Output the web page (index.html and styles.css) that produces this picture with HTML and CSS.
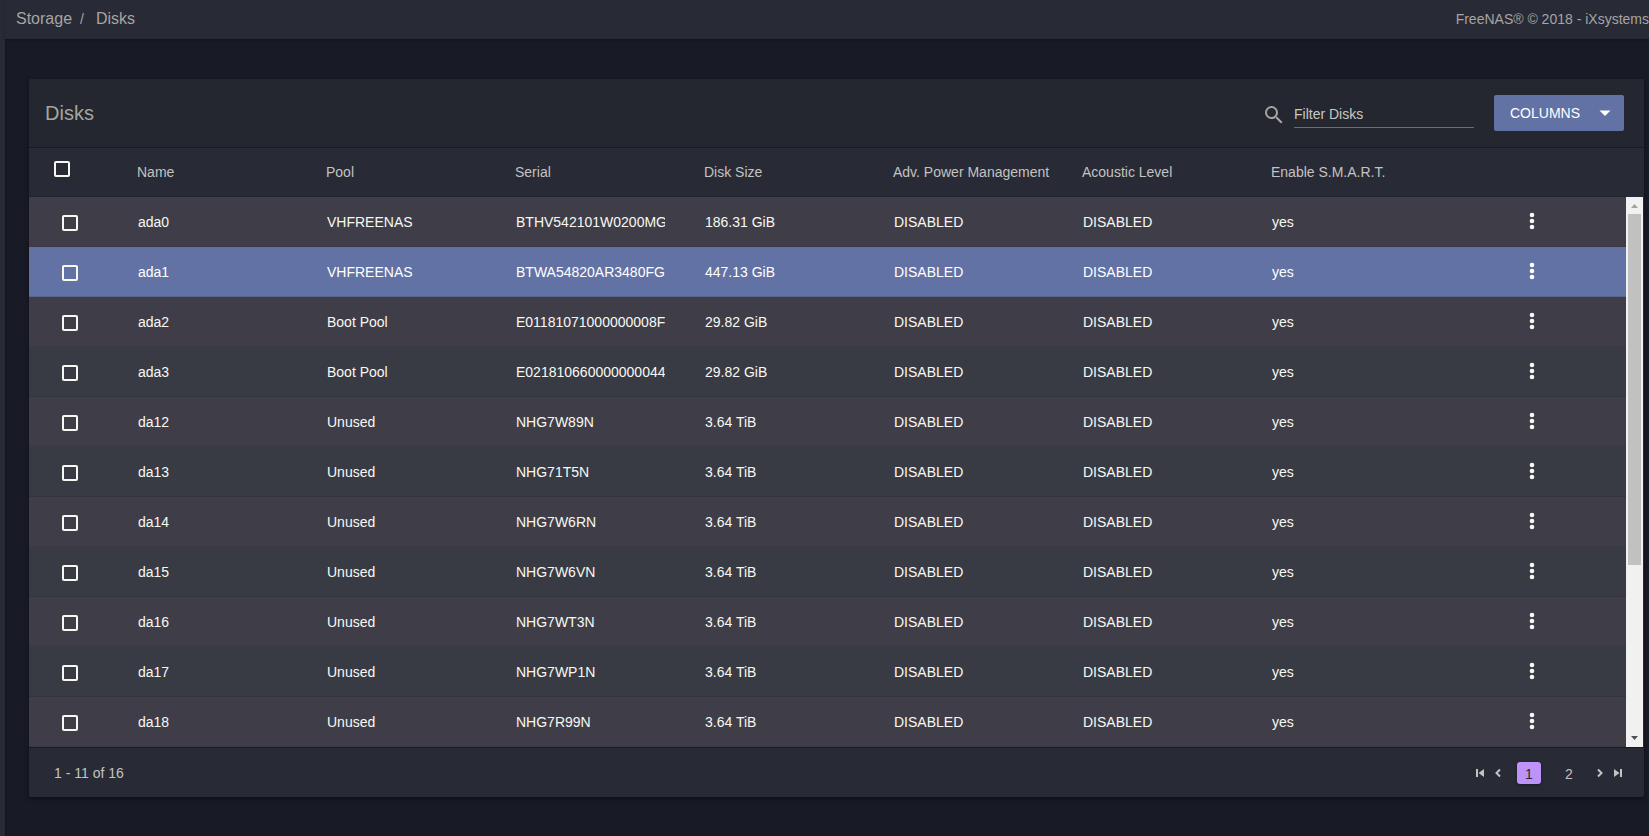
FILE: index.html
```html
<!DOCTYPE html>
<html lang="en">

<head>
  <meta charset="UTF-8" />
  <meta name="viewport" content="width=device-width, initial-scale=1.0" />
  <title>FreeNAS - Disks</title>
  <link rel="stylesheet" href="styles.css">
</head>

<body>
  <div class="sidebar"></div>
  <div class="page">
    <header class="topbar">
      <nav class="breadcrumb">
        <a href="#">Storage</a>
        <span class="slash">/</span>
        <a href="#">Disks</a>
      </nav>
      <span class="copyright">FreeNAS® © 2018 - iXsystems</span>
    </header>

    <main class="content">
      <div class="card">
        <div class="toolbar">
          <h1>Disks</h1>
          <label class="search" for="filter">
            <svg width="24" height="24" viewBox="0 0 24 24"><path d="M15.5 14h-.79l-.28-.27A6.47 6.47 0 0 0 16 9.5 6.5 6.5 0 1 0 9.5 16c1.61 0 3.09-.59 4.23-1.57l.27.28v.79l5 4.99L20.49 19l-4.99-5zm-6 0C7.01 14 5 11.99 5 9.5S7.01 5 9.5 5 14 7.01 14 9.5 11.99 14 9.5 14z"/></svg>
          </label>
          <input type="text" id="filter" class="filter" placeholder="Filter Disks" />
          <button type="button" class="columns-btn">
            COLUMNS
            <svg width="24" height="24" viewBox="0 0 24 24"><path d="M6.5 9.5h11L12 15z"/></svg>
          </button>
        </div>

        <div class="table-wrap">
          <table>
            <colgroup>
              <col class="col-check" />
              <col span="7" />
              <col class="col-menu" />
            </colgroup>
            <thead>
              <tr>
                <th><input type="checkbox" aria-label="Select all" /></th>
                <th>Name</th>
                <th>Pool</th>
                <th>Serial</th>
                <th>Disk Size</th>
                <th>Adv. Power Management</th>
                <th>Acoustic Level</th>
                <th>Enable S.M.A.R.T.</th>
                <th></th>
              </tr>
            </thead>
            <tbody id="disks"></tbody>
          </table>
          <div class="scrollbar">
            <svg width="17" height="17" viewBox="0 0 17 17"><path fill="#a3a3a3" d="M5 11h7L8.5 7z"/></svg>
            <div class="track"><div class="thumb"></div></div>
            <svg width="17" height="17" viewBox="0 0 17 17"><path fill="#505050" d="M5 6h7l-3.5 4z"/></svg>
          </div>
        </div>

        <footer class="pager">
          <span class="count">1 - 11 of 16</span>
          <button type="button" class="first" aria-label="First page">
            <svg width="10" height="10" viewBox="0 0 10 10"><path d="M1 1h2v8H1zM9 1v8L3.5 5z"/></svg>
          </button>
          <button type="button" class="prev" aria-label="Previous page">
            <svg width="10" height="10" viewBox="0 0 10 10"><path class="chevron" d="M7 1.5L3.5 5 7 8.5"/></svg>
          </button>
          <button type="button" class="num active">1</button>
          <button type="button" class="num">2</button>
          <button type="button" class="next" aria-label="Next page">
            <svg width="10" height="10" viewBox="0 0 10 10"><path class="chevron" d="M3 1.5L6.5 5 3 8.5"/></svg>
          </button>
          <button type="button" class="last" aria-label="Last page">
            <svg width="10" height="10" viewBox="0 0 10 10"><path d="M7 1h2v8H7zM1 1v8l5.5-4z"/></svg>
          </button>
        </footer>
      </div>
    </main>
  </div>

  <script src="script.js"></script>
</body>

</html>
```

FILE: styles.css
```css
* {
  box-sizing: border-box;
}

body {
  margin: 0;
  min-height: 100vh;
  display: flex;
  overflow-x: hidden;
  background: #181a26;
  color: #f8f8f2;
  font-family: "Liberation Sans", Arial, sans-serif;
  font-size: 14px;
}

button,
input {
  font: inherit;
  color: inherit;
}

button {
  border: none;
  background: none;
  padding: 0;
  cursor: pointer;
}

svg {
  display: block;
  fill: currentColor;
}

.sidebar {
  width: 5px;
  flex: none;
  background: #282a36;
  box-shadow: 0 0 3px rgba(0, 0, 0, 0.4);
}

.page {
  flex: 1;
  min-width: 0;
}

/* top bar */
.topbar {
  height: 39px;
  padding: 0 0 2px 11px;
  display: flex;
  align-items: center;
  justify-content: space-between;
  background: #282a36;
  color: #a5a5a3;
  box-shadow: 0 1px 2px rgba(0, 0, 0, 0.3);
}

.breadcrumb {
  display: flex;
  align-items: center;
  gap: 8px;
  font-size: 16px;
}

.breadcrumb a {
  color: inherit;
  text-decoration: none;
}

.breadcrumb .slash {
  font-size: 14px;
  margin-right: 4px;
}

.copyright {
  white-space: nowrap;
}

.content {
  padding: 40px 5px 39px 24px;
}

.card {
  border-radius: 2px;
  background: #282a36;
  box-shadow: 0 2px 4px rgba(0, 0, 0, 0.4);
}

/* card header */
.toolbar {
  height: 69px;
  padding: 0 20px 0 16px;
  display: flex;
  align-items: center;
  background: #24272f;
  border-bottom: 1px solid #181a26;
  border-radius: 2px 2px 0 0;
}

.toolbar h1 {
  flex: 1;
  margin: 0;
  font-size: 20px;
  font-weight: normal;
  color: #a5a5a0;
}

.search {
  margin-right: 8px;
  padding-top: 4px;
  color: #a5a5a0;
}

.filter {
  width: 180px;
  height: 30px;
  margin-right: 20px;
  padding: 2px 0 0;
  border: none;
  border-bottom: 1px solid #6a6c71;
  background: none;
  outline: none;
}

.filter::placeholder {
  color: #c8c8c4;
  opacity: 1;
}

.columns-btn {
  width: 130px;
  height: 36px;
  padding: 0 7px 0 16px;
  display: flex;
  align-items: center;
  justify-content: space-between;
  border-radius: 2px;
  background: #6272a4;
  color: #fff;
}

/* table */
.table-wrap {
  display: flex;
  padding-right: 1px;
}

table {
  width: 100%;
  min-width: 0;
  table-layout: fixed;
  border-collapse: separate;
  border-spacing: 0;
}

.col-check {
  width: 89px;
}

.col-menu {
  width: 185px;
}

th {
  height: 49px;
  padding: 0 0 0 19px;
  border-bottom: 1px solid #21232e;
  font-weight: normal;
  text-align: left;
  white-space: nowrap;
  color: #c3c3c0;
}

th:first-child {
  padding: 0 0 6px 25px;
}

td {
  height: 50px;
  padding: 0 20px;
  border-bottom: 1px solid rgba(24, 26, 38, 0.15);
}

td:first-child {
  padding: 3px 0 0 33px;
}

td:last-child {
  padding: 0 0 0 79px;
}

td div {
  overflow: hidden;
  white-space: nowrap;
}

td svg {
  margin-top: 1px;
}

tbody tr:nth-child(odd) {
  background: #3f3e48;
}

tbody tr:nth-child(even) {
  background: #383b43;
}

tbody tr.selected {
  background: #6272a4;
  color: #fff;
}

input[type="checkbox"] {
  appearance: none;
  display: block;
  width: 16px;
  height: 16px;
  margin: 0;
  border: 2px solid #f8f8f2;
  border-radius: 2px;
}

.scrollbar {
  width: 17px;
  flex: none;
  margin-top: 49px;
  display: flex;
  flex-direction: column;
  background: #f1f1f1;
}

.track {
  flex: 1;
  padding: 0 2px;
}

.thumb {
  height: 68%;
  background: #c1c1c1;
}

/* pager */
.pager {
  height: 50px;
  padding: 0 21px 0 25px;
  display: flex;
  align-items: center;
  border-top: 1px solid #181a26;
  color: #c3c3c0;
}

.count {
  flex: 1;
}

.prev {
  margin: 0 14px 0 8px;
}

.next {
  margin: 0 8px 0 14px;
}

.num {
  width: 24px;
  height: 22px;
  padding-top: 2px;
  border-radius: 3px;
}

.num + .num {
  margin-left: 16px;
}

.num.active {
  background: #bd93f9;
  color: #282a36;
  box-shadow: 0 1px 3px rgba(0, 0, 0, 0.4);
}

.chevron {
  fill: none;
  stroke: currentColor;
  stroke-width: 2;
}
```

FILE: script.js
```js
const disks = [
  ["ada0", "VHFREENAS", "BTHV542101W0200MG", "186.31 GiB"],
  ["ada1", "VHFREENAS", "BTWA54820AR3480FG", "447.13 GiB"],
  ["ada2", "Boot Pool", "E01181071000000008F", "29.82 GiB"],
  ["ada3", "Boot Pool", "E021810660000000044", "29.82 GiB"],
  ["da12", "Unused", "NHG7W89N", "3.64 TiB"],
  ["da13", "Unused", "NHG71T5N", "3.64 TiB"],
  ["da14", "Unused", "NHG7W6RN", "3.64 TiB"],
  ["da15", "Unused", "NHG7W6VN", "3.64 TiB"],
  ["da16", "Unused", "NHG7WT3N", "3.64 TiB"],
  ["da17", "Unused", "NHG7WP1N", "3.64 TiB"],
  ["da18", "Unused", "NHG7R99N", "3.64 TiB"]
];

const menuIcon = `<svg width="24" height="24" viewBox="0 0 24 24">
  <circle cx="12" cy="6" r="2.3"/><circle cx="12" cy="12" r="2.3"/><circle cx="12" cy="18" r="2.3"/>
</svg>`;

document.querySelector("#disks").innerHTML = disks.map(disk => {
  // power management, acoustic level and S.M.A.R.T. are the same for every disk
  const cells = [...disk, "DISABLED", "DISABLED", "yes"];
  return `<tr class="${disk[0] === "ada1" ? "selected" : ""}">
    <td><input type="checkbox" aria-label="Select ${disk[0]}" /></td>
    ${cells.map(cell => `<td><div>${cell}</div></td>`).join("")}
    <td><button type="button" aria-label="Options for ${disk[0]}">${menuIcon}</button></td>
  </tr>`;
}).join("");
```
